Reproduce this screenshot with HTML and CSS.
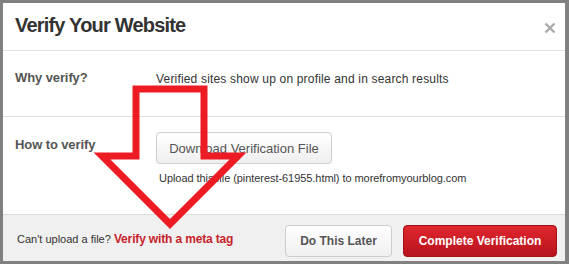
FILE: index.html
```html
<!DOCTYPE html>
<html lang="en">
<head>
  <meta charset="UTF-8">
  <title>Verify Your Website</title>
  <link rel="stylesheet" href="styles.css">
</head>
<body>
  <div class="dialog">
    <div class="dialog-header">
      <h1>Verify Your Website</h1>
      <button class="close-btn" aria-label="Close">
        <svg width="12" height="12" viewBox="0 0 12 12">
          <path d="M1.5 1.5 L10.5 10.5 M10.5 1.5 L1.5 10.5" stroke="#aaa" stroke-width="2.4" fill="none"/>
        </svg>
      </button>
    </div>

    <div class="row row-why">
      <div class="row-label">Why verify?</div>
      <div class="row-body">
        <p class="row-text">Verified sites show up on profile and in search results</p>
      </div>
    </div>

    <div class="row row-how">
      <div class="row-label">How to verify</div>
      <div class="row-body">
        <button class="btn btn-download">Download Verification File</button>
        <p class="hint">Upload this file (pinterest-61955.html) to morefromyourblog.com</p>
      </div>
    </div>

    <div class="dialog-footer">
      <p class="footer-note">Can't upload a file? <a href="#" class="meta-link">Verify with a meta tag</a></p>
      <div class="footer-actions">
        <button class="btn btn-later">Do This Later</button>
        <button class="btn btn-complete">Complete Verification</button>
      </div>
    </div>
  </div>

  <!-- hand-drawn annotation arrow on top of the dialog -->
  <svg class="annotation" width="569" height="264" viewBox="0 0 569 264">
    <path d="M136 89 L204 89 L204 156 L238 156 L170 224 L102 156 L136 156 Z"
          fill="none" stroke="#ed1c24" stroke-width="7" stroke-linejoin="miter"/>
  </svg>
</body>
</html>
```

FILE: styles.css
```css
body {
  margin: 0;
  padding: 3px 4px 3px 3px;
  background-color: #808080;
  font-family: "Liberation Sans", Arial, sans-serif;
  color: #333;
  position: relative;
  width: 562px;
  height: 258px;
}

.dialog {
  background-color: white;
  height: 258px;
  display: flex;
  flex-direction: column;
}

.dialog-header {
  box-sizing: border-box;
  height: 48px;
  padding: 0 9px 4px 12px;
  display: flex;
  align-items: center;
  justify-content: space-between;
  border-bottom: 1px solid #e0e0e0;
}

.dialog-header h1 {
  margin: 0;
  font-size: 20px;
  line-height: 24px;
  font-weight: bold;
  letter-spacing: -0.8px;
  color: #333;
}

.close-btn {
  border: none;
  background: none;
  padding: 0;
  width: 12px;
  height: 12px;
  margin-top: 6px;
  cursor: pointer;
  display: block;
}

.close-btn svg {
  display: block;
}

.row {
  box-sizing: border-box;
  display: flex;
  padding: 19px 12px 0;
}

.row-why {
  height: 66px;
  border-bottom: 1px solid #e0e0e0;
}

.row-how {
  height: 97px;
  padding-top: 15px;
}

.row-label {
  width: 141px;
  flex-shrink: 0;
  font-size: 13px;
  line-height: 16px;
  font-weight: bold;
  letter-spacing: -0.1px;
  color: #555;
}

.row-how .row-label {
  padding-top: 5px;
}

.row-text {
  margin: 1px 0 0;
  font-size: 12px;
  line-height: 16px;
  letter-spacing: 0.18px;
  color: #333;
}

.btn {
  font-family: "Liberation Sans", Arial, sans-serif;
  border-radius: 4px;
  cursor: pointer;
}

.btn-download {
  display: block;
  width: 176px;
  height: 32px;
  font-size: 13px;
  color: #555;
  background: linear-gradient(#ffffff, #efefef);
  border: 1px solid #cfcfcf;
}

.hint {
  margin: 7px 0 0 3px;
  font-size: 11px;
  line-height: 14px;
  letter-spacing: -0.06px;
  color: #333;
}

.dialog-footer {
  box-sizing: border-box;
  height: 47px;
  border-top: 1px solid #dcdcdc;
  background-color: #f0f0f0;
  display: flex;
  align-items: center;
  justify-content: space-between;
  padding: 6px 8px 0 14px;
}

.footer-note {
  margin: 0 0 4px;
  font-size: 11px;
  color: #333;
}

.meta-link {
  color: #c8232c;
  font-weight: bold;
  font-size: 12px;
  letter-spacing: -0.15px;
  text-decoration: none;
}

.footer-actions {
  display: flex;
  gap: 11px;
}

.btn-later {
  width: 107px;
  height: 32px;
  font-size: 12px;
  font-weight: bold;
  color: #555;
  background: linear-gradient(#ffffff, #f0f0f0);
  border: 1px solid #cccccc;
}

.btn-complete {
  width: 154px;
  height: 32px;
  font-size: 12px;
  font-weight: bold;
  color: white;
  background: linear-gradient(#e0262f, #b8131c);
  border: 1px solid #a3111a;
}

.annotation {
  position: absolute;
  top: 0;
  left: 0;
  pointer-events: none;
}
```
